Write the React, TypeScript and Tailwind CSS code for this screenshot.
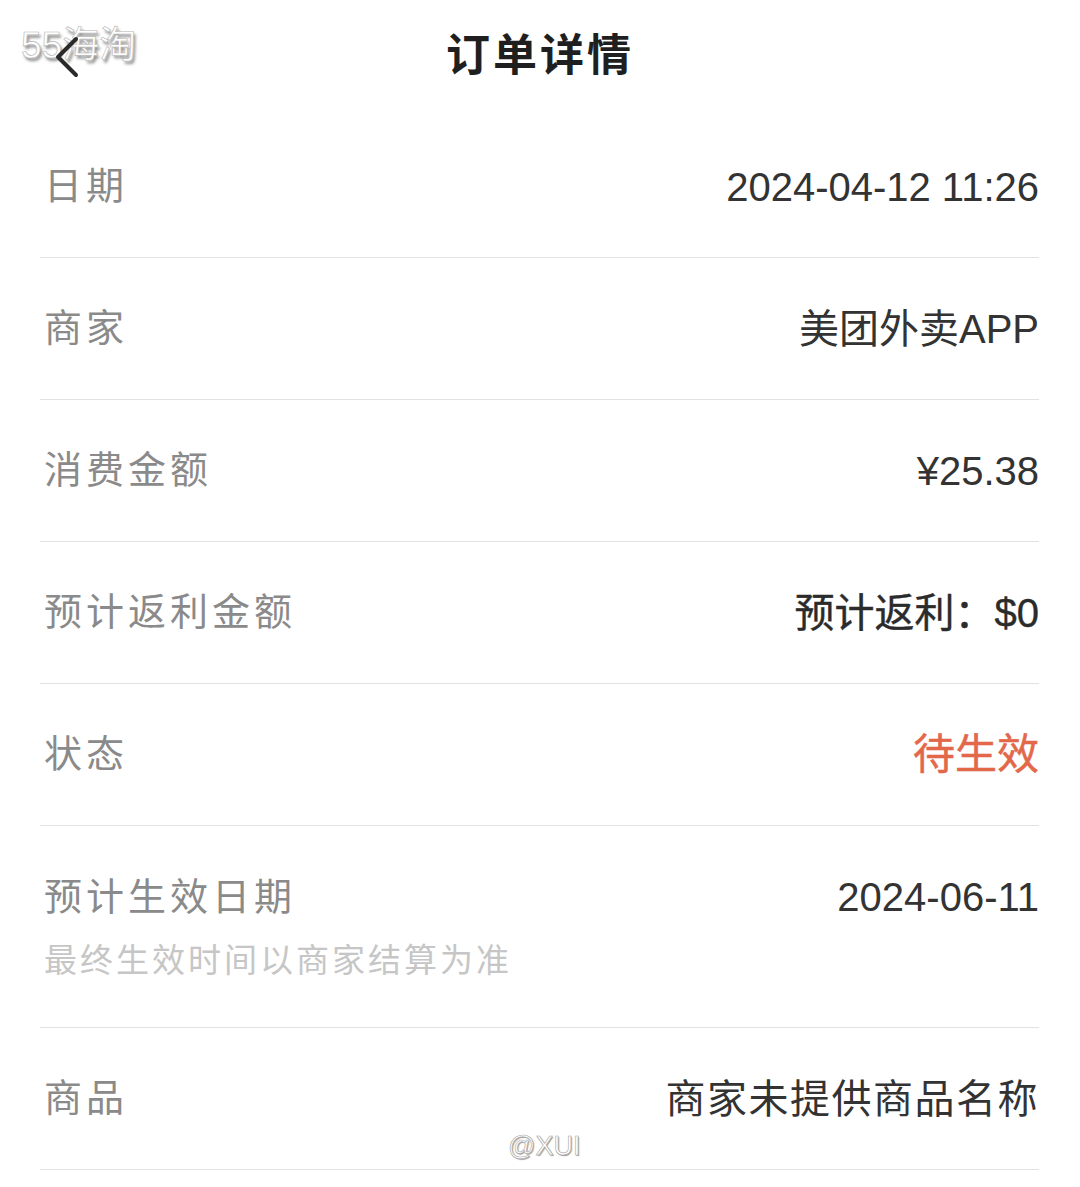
const cjk = "font-['Liberation_Sans','Noto_Sans_CJK_SC',sans-serif]";

type Row = {
  label: string;
  value: string;
  tone?: "normal" | "bold" | "orange" | "wide";
  note?: string;
};

const rows: Row[] = [
  { label: "日期", value: "2024-04-12 11:26" },
  { label: "商家", value: "美团外卖APP" },
  { label: "消费金额", value: "¥25.38" },
  { label: "预计返利金额", value: "预计返利：$0", tone: "bold" },
  { label: "状态", value: "待生效", tone: "orange" },
  { label: "预计生效日期", value: "2024-06-11", note: "最终生效时间以商家结算为准" },
  { label: "商品", value: "商家未提供商品名称", tone: "wide" },
];

function BackArrow() {
  return (
    <svg className="absolute left-[52px] top-[34px] z-10" width="32" height="46" viewBox="0 0 32 46" fill="none">
      <path d="M24 5 L6 23 L24 41" stroke="#2a2a2a" strokeWidth="4" strokeLinecap="round" strokeLinejoin="round" />
    </svg>
  );
}

function DetailRow({ row }: { row: Row }) {
  const valueClass =
    row.tone === "orange"
      ? "text-[42px] text-[#e3684a] [-webkit-text-stroke:0.5px_#e3684a]"
      : row.tone === "bold"
      ? "text-[40px] text-[#2b2b2b] [-webkit-text-stroke:0.4px_#2b2b2b]"
      : row.tone === "wide"
      ? "text-[40px] tracking-[1.5px] text-[#333333]"
      : "text-[40px] text-[#333333]";

  if (row.note) {
    return (
      <div className="border-b border-[#e2e2e2] pt-[48px] pb-[46px]">
        <div className="flex items-center justify-between pl-1">
          <span className="text-[38px] leading-[46px] tracking-[4px] text-[#8a8a8a]">{row.label}</span>
          <span className="text-[40px] leading-[46px] text-[#333333]">{row.value}</span>
        </div>
        <div className="pl-1 mt-[21px] text-[33px] leading-[40px] tracking-[3px] text-[#c6c6c6]">{row.note}</div>
      </div>
    );
  }

  return (
    <div className="flex h-[142px] items-center justify-between border-b border-[#e2e2e2] pl-1">
      <span className="text-[38px] tracking-[4px] text-[#8a8a8a]">{row.label}</span>
      <span className={valueClass}>{row.value}</span>
    </div>
  );
}

export default function App() {
  return (
    <div className={`relative min-h-[1187px] w-[1080px] bg-white ${cjk}`}>
      <div className="relative flex h-[116px] items-center justify-center">
        <span className="absolute left-[21px] top-[18px] text-[37px] text-white [-webkit-text-stroke:0.6px_#b5b5b5] [text-shadow:2px_3px_3px_#8c8c8c]">
          55海淘
        </span>
        <BackArrow />
        <h1 className="text-[44px] font-bold tracking-[3px] text-[#1f1f1f] pb-[4px]">订单详情</h1>
      </div>

      <div className="mx-[40px] mr-[41px]">
        {rows.map((r) => (
          <DetailRow key={r.label} row={r} />
        ))}
      </div>

      <span className="absolute left-[508px] top-[1126px] text-[27px] text-white [-webkit-text-stroke:0.6px_#a8a8a8] [text-shadow:1px_1px_1px_#999]">
        @XUI
      </span>
    </div>
  );
}
